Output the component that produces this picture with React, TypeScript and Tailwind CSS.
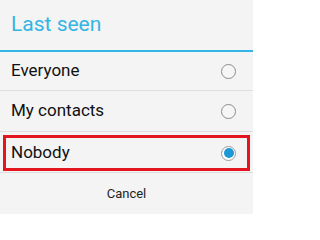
import React from 'react';

type Option = { label: string; selected?: boolean };

const options: Option[] = [
  { label: 'Everyone' },
  { label: 'My contacts' },
  { label: 'Nobody', selected: true },
];

const Radio = ({ selected }: { selected?: boolean }) =>
  selected ? (
    <span className="flex h-[15px] w-[15px] items-center justify-center rounded-full border border-[#9a9a9a] bg-white">
      <span className="h-[10px] w-[10px] rounded-full bg-[#1b98d5]" />
    </span>
  ) : (
    <span className="h-[15px] w-[15px] rounded-full border border-[#8c8c8c] bg-[#f6f6f6]" />
  );

export default function App() {
  return (
    <div className="flex h-[214px] w-[253px] flex-col bg-[#f4f4f4] font-['Roboto',sans-serif]">
      {/* dialog title */}
      <div className="flex h-[50px] items-center px-[11px] text-[21px] text-[#33b5e5]">Last seen</div>
      <div className="h-[2px] bg-[#33b5e5]" />

      {/* options */}
      <div className="flex h-[39px] items-center justify-between border-b border-[#dedede] pl-[11px] pr-[17px] text-[17px] text-[#111]">
        <span>{options[0].label}</span>
        <Radio />
      </div>
      <div className="flex h-[41px] items-center justify-between border-b border-[#dedede] pl-[11px] pr-[17px] text-[17px] text-[#111]">
        <span>{options[1].label}</span>
        <Radio />
      </div>
      <div className="h-[41px] border-b border-[#dedede] px-[3px] pt-[3px]">
        <div className="flex h-[36px] items-center justify-between border-[3px] border-[#e3161f] pl-[5px] pr-[11px] text-[17px] text-[#111]">
          <span>{options[2].label}</span>
          <Radio selected />
        </div>
      </div>

      {/* cancel */}
      <div className="flex flex-1 items-center justify-center text-[13px] text-[#222]">Cancel</div>
    </div>
  );
}
